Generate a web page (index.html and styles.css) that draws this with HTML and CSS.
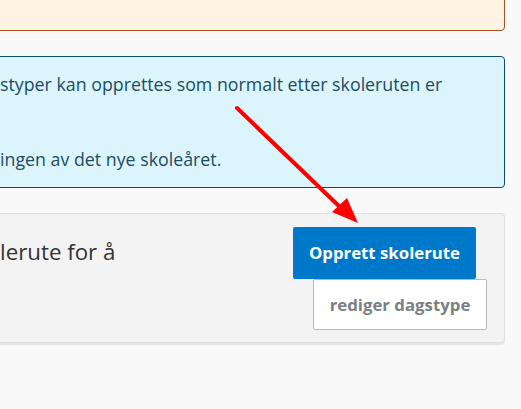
FILE: index.html
```html
<!DOCTYPE html>
<html lang="nb">

<head>
    <meta charset="UTF-8">
    <meta name="viewport" content="width=device-width, initial-scale=1.0">
    <title>Skolerute</title>
    <link rel="stylesheet" href="styles.css">
</head>

<body>
    <div class="page">
        <div class="alert alert-warning"></div>

        <div class="alert alert-info">
            <p class="first">styper kan opprettes som normalt etter skoleruten er</p>
            <p>ingen av det nye skoleåret.</p>
        </div>

        <div class="panel">
            <div class="panel-text">lerute for å</div>
            <div class="panel-actions">
                <button class="btn btn-primary">Opprett skolerute</button>
                <button class="btn btn-default">rediger dagstype</button>
            </div>
        </div>
    </div>

    <!-- annotation arrow -->
    <svg class="arrow" width="521" height="409" viewBox="0 0 521 409">
        <line x1="237" y1="108" x2="342" y2="209" stroke="#ff0000" stroke-width="4" stroke-linecap="round" />
        <polygon points="358,223 332,212 347,198" fill="#ff0000" />
    </svg>
</body>

</html>
```

FILE: styles.css
```css
* {
    box-sizing: border-box;
    margin: 0;
    padding: 0;
}

body {
    font-family: "Open Sans", "Noto Sans", sans-serif;
    background-color: #f9f9f9;
    color: #333;
    width: 521px;
    height: 409px;
    overflow: hidden;
    position: relative;
}

.page {
    margin-left: -30px;
    margin-right: 16px;
}

.alert {
    border: 1px solid;
    border-radius: 4px;
    margin-bottom: 25px;
}

.alert-warning {
    margin-top: -30px;
    height: 61px;
    background-color: #fff3e3;
    border-color: #a9521f;
}

.alert-info {
    background-color: #dcf5fc;
    border-color: #0b4f6c;
    color: #1b4c64;
    font-size: 17.8px;
    line-height: 24px;
    padding: 15px 16px 16px 29px;
}

.alert-info .first {
    margin-bottom: 51px;
}

.panel {
    display: flex;
    justify-content: space-between;
    background-color: #f3f3f3;
    border: 1px solid #e0e0e0;
    border-radius: 4px;
    box-shadow: 0 2px 1px rgba(0, 0, 0, 0.08);
    padding: 13px 17px 12px 29px;
}

.panel-text {
    font-size: 22.3px;
    line-height: 30px;
    padding-top: 10px;
    color: #333;
}

.panel-actions {
    display: flex;
    flex-direction: column;
    align-items: flex-end;
}

.btn {
    font-family: "Open Sans", "Noto Sans", sans-serif;
    font-weight: bold;
    font-size: 16.8px;
    line-height: 24px;
    border-radius: 2px;
    cursor: pointer;
}

.btn-primary {
    background-color: #0078c9;
    color: #fff;
    border: none;
    width: 183px;
    height: 52px;
    margin-right: 11px;
}

.btn-default {
    background-color: #fff;
    color: #7a7f84;
    border: 1px solid #b4b9be;
    width: 174px;
    height: 51px;
}

.arrow {
    position: absolute;
    top: 0;
    left: 0;
    pointer-events: none;
}
```
